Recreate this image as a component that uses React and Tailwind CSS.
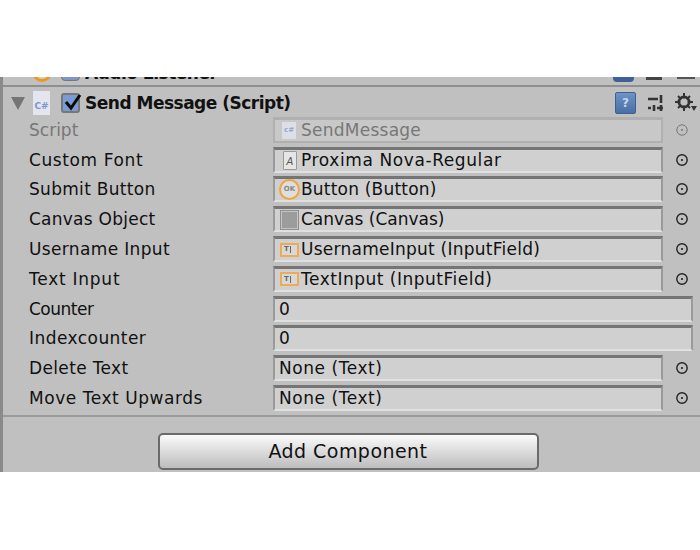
import { Fragment } from 'react';

const rows = [
  { label: 'Script', value: 'SendMessage', icon: 'cs', disabled: true, labelTrack: 'tracking-[0px]', valueTrack: 'tracking-[0.25px]' },
  { label: 'Custom Font', value: 'Proxima Nova-Regular', icon: 'font', labelTrack: 'tracking-[0.6px]', valueTrack: 'tracking-[0.6px]' },
  { label: 'Submit Button', value: 'Button (Button)', icon: 'ok', labelTrack: 'tracking-[0.3px]', valueTrack: 'tracking-[0.2px]' },
  { label: 'Canvas Object', value: 'Canvas (Canvas)', icon: 'canvas', labelTrack: 'tracking-[0.25px]', valueTrack: 'tracking-[0px]' },
  { label: 'Username Input', value: 'UsernameInput (InputField)', icon: 'input', labelTrack: 'tracking-[0.35px]', valueTrack: 'tracking-[0.25px]' },
  { label: 'Text Input', value: 'TextInput (InputField)', icon: 'input', labelTrack: 'tracking-[0.75px]', valueTrack: 'tracking-[0.5px]' },
  { label: 'Counter', value: '0', wide: true, labelTrack: 'tracking-[-0.5px]', valueTrack: 'tracking-[0.5px]' },
  { label: 'Indexcounter', value: '0', wide: true, labelTrack: 'tracking-[0.45px]', valueTrack: 'tracking-[0.5px]' },
  { label: 'Delete Text', value: 'None (Text)', labelTrack: 'tracking-[0.35px]', valueTrack: 'tracking-[0.55px]' },
  { label: 'Move Text Upwards', value: 'None (Text)', labelTrack: 'tracking-[0.55px]', valueTrack: 'tracking-[0.55px]' },
];

const FieldIcon = ({ type }) => {
  if (type === 'cs') {
    return (
      <span className="flex h-[17px] w-[14px] shrink-0 items-center justify-center bg-[#dcdfe6] text-[7px] font-bold tracking-normal text-[#9aa6c9] mr-[5px] ml-[7px]">c#</span>
    );
  }
  if (type === 'font') {
    return (
      <span className="flex h-[19px] w-[14px] shrink-0 items-end justify-center rounded-[1px] border border-[#9a9a9a] bg-[#e6e6e6] text-[10px] italic leading-[14px] tracking-normal text-[#555] mr-[4px] ml-[8px]">A</span>
    );
  }
  if (type === 'ok') {
    return (
      <span className="flex h-[21px] w-[21px] shrink-0 items-center justify-center rounded-full border-2 border-[#eda63e] bg-[#dedede] text-[7px] font-bold tracking-normal text-[#888] mr-[1px] ml-[4px]">OK</span>
    );
  }
  if (type === 'canvas') {
    return (
      <span className="h-[20px] w-[19px] shrink-0 border border-[#8f8f8f] bg-[#9c9c9c] shadow-[inset_0_0_0_1px_#c4c4c4] mr-[2px] ml-[5px]" />
    );
  }
  if (type === 'input') {
    return (
      <span className="flex h-[14px] w-[19px] shrink-0 items-center gap-[1px] border-2 border-[#eeaa55] bg-[#d8d8d8] pl-[2px] mr-[2px] ml-[5px]">
        <span className="text-[7px] font-bold leading-none tracking-normal text-[#666]">T</span>
        <span className="h-[7px] w-[1px] bg-[#666]" />
      </span>
    );
  }
  return <span className="w-[4px] shrink-0" />;
};

const Picker = ({ muted }) => (
  <svg width="14" height="14" viewBox="0 0 14 14" className="block shrink-0">
    <circle cx="7" cy="7" r="5.2" fill="none" stroke={muted ? '#777' : '#222'} strokeWidth={muted ? 1 : 1.4} />
    <circle cx="7" cy="7" r="1.1" fill={muted ? '#777' : '#222'} />
  </svg>
);

export default function App() {
  return (
    <div className="h-[550px] w-[700px] overflow-hidden bg-white pt-[77px] font-['DejaVu_Sans',sans-serif]">
      <div className="h-[395px] border-l-[3px] border-[#8a8a8a] bg-[#c0c0c0] text-[#111]">
        {/* clipped row above */}
        <div className="flex h-[10px] items-end overflow-hidden border-b-2 border-[#8f8f8f]">
          <div className="ml-[29px] h-[20px] w-[20px] shrink-0 -translate-y-[3px] rounded-full border-[3px] border-[#e89a20] bg-[#d9d0bd]" />
          <div className="ml-[9px] h-[18px] w-[19px] shrink-0 -translate-y-[4px] rounded-sm border border-[#777] bg-[#7f97c4]" />
          <span className="ml-[5px] -translate-y-[1px] text-[17px] font-bold leading-[22px] tracking-[-0.5px] whitespace-nowrap">Audio Listener</span>
          <div className="ml-auto h-[8px] w-[21px] -translate-y-[3px] rounded-b-sm bg-[#3f5f98]" />
          <div className="ml-[12px] h-[4px] w-[16px] -translate-y-[5px] bg-[#444]" />
          <div className="ml-[15px] mr-[5px] h-[3px] w-[18px] -translate-y-[6px] bg-[#555]" />
        </div>

        {/* component header */}
        <div className="flex h-[28px] items-center pt-[4px]">
          <svg width="14" height="13" viewBox="0 0 14 13" className="ml-[8px] shrink-0">
            <path d="M0 0H14L7 13Z" fill="#757575" />
          </svg>
          <span className="ml-[8px] flex h-[24px] w-[17px] shrink-0 items-end justify-center bg-[#e3e6ee] pb-[4px] text-[9px] font-bold leading-none text-[#7f93cf]">C#</span>
          <span className="relative ml-[11px] h-[20px] w-[19px] shrink-0 rounded-[3px] border-2 border-[#777] bg-[#7b9bd6]">
            <svg width="22" height="20" viewBox="0 0 22 20" className="absolute -top-[3px] left-0">
              <path d="M3 10L8 16L17 3" fill="none" stroke="#0b0b0b" strokeWidth="3" />
            </svg>
          </span>
          <span className="ml-[5px] text-[17px] font-bold leading-none tracking-[-0.5px] whitespace-nowrap">Send Message (Script)</span>
          <span className="ml-auto flex h-[22px] w-[21px] items-center justify-center rounded-[2px] border border-[#40608f] bg-gradient-to-b from-[#6d94c6] to-[#4a6ea3] text-[12px] font-bold text-[#c6d6ec]">?</span>
          <svg width="18" height="20" viewBox="0 0 18 20" className="ml-[11px] shrink-0">
            <path d="M1 6H11M14 2V10M1 15H4M7 12V18M10 15H16M14 12V18" fill="none" stroke="#333" strokeWidth="2.6" />
          </svg>
          <svg width="22" height="20" viewBox="0 0 22 20" className="ml-[10px] mr-[3px] shrink-0">
            <circle cx="9" cy="9" r="5" fill="none" stroke="#333" strokeWidth="3" />
            <path d="M9 0V18M0 9H18M3 3L15 15M15 3L3 15" stroke="#333" strokeWidth="2" />
            <circle cx="9" cy="9" r="3.6" fill="#c0c0c0" />
            <path d="M16 13H22L19 18Z" fill="#333" />
          </svg>
        </div>

        {/* properties */}
        <div className="grid grid-cols-[270px_1fr] auto-rows-[29.8px] items-center pr-[7px] text-[17px] leading-none">
          {rows.map((row) => (
            <Fragment key={row.label}>
              <span className={`pl-[26px] pt-[1px] whitespace-nowrap ${row.labelTrack} ${row.disabled ? 'text-[#777]' : ''}`}>{row.label}</span>
              <div className="flex items-center">
                <div
                  className={`flex h-[26px] items-center overflow-hidden border-2 border-t-[3px] whitespace-nowrap ${row.valueTrack} ${
                    row.disabled
                      ? 'border-[#b0b0b0] bg-[#c8c8c8] text-[#777]'
                      : 'border-[#9a9a9a] border-t-[#757575] border-b-[#e0e0e0] bg-[#d0d0d0]'
                  } ${row.wide ? 'w-[420px]' : 'w-[390px]'}`}
                >
                  <FieldIcon type={row.icon} />
                  {row.value}
                </div>
                {!row.wide && (
                  <span className="ml-[12px]">
                    <Picker muted={row.disabled} />
                  </span>
                )}
              </div>
            </Fragment>
          ))}
        </div>

        <div className="mt-[2px] flex h-[62px] justify-center border-t-2 border-[#9a9a9a] pt-[16px] pr-[7px]">
          <button className="h-[37px] w-[381px] rounded-[5px] border-2 border-[#6a6a6a] bg-gradient-to-b from-[#fbfbfb] to-[#bdbdbd] text-[19px] tracking-[0.45px] text-[#111]">
            Add Component
          </button>
        </div>
      </div>
    </div>
  );
}
